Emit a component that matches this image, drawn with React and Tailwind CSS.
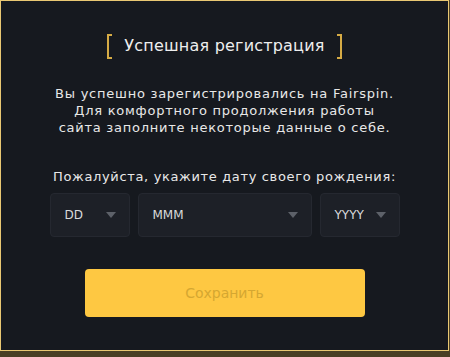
function Caret() {
  return (
    <svg width="10" height="6" viewBox="0 0 10 6" className="shrink-0">
      <path d="M0 0h10L5 6z" fill="#5d6169" />
    </svg>
  );
}

function Select({ label, width }) {
  return (
    <div
      className={`${width} h-[44px] flex items-center justify-between pl-[14px] pr-[13px] rounded-[4px] bg-[#1d2027] border border-[#252830] text-[12px] text-[#d9dadc]`}
    >
      <span>{label}</span>
      <Caret />
    </div>
  );
}

export default function App() {
  return (
    <div
      className="w-[450px] h-[357px] bg-[#4a3f25]"
      style={{ fontFamily: '"DejaVu Sans", "Open Sans", sans-serif' }}
    >
      <div className="w-[449px] h-[351px] bg-[#16191f] border border-[#e9c873] flex flex-col items-center">
        <div className="mt-[32px] h-[26px] flex items-center gap-[8px]">
          <span className="w-[5px] h-[25px] border-l-2 border-y-2 border-[#d6ab45]" />
          <span className="text-[16px] text-[#eeeeee] leading-none px-[4px] tracking-[0.2px]">Успешная регистрация</span>
          <span className="w-[5px] h-[25px] border-r-2 border-y-2 border-[#d6ab45]" />
        </div>

        <p className="mt-[26px] text-center text-[13px] leading-[17px] text-[#e8e8e8] tracking-[0.75px]">
          Вы успешно зарегистрировались на Fairspin.
          <br />
          Для комфортного продолжения работы
          <br />
          сайта заполните некоторые данные о себе.
        </p>

        <p className="mt-[32px] text-[13px] leading-[17px] text-[#e8e8e8] tracking-[0.65px]">
          Пожалуйста, укажите дату своего рождения:
        </p>

        <div className="mt-[8px] flex gap-[8px]">
          <Select label="DD" width="w-[80px]" />
          <Select label="MMM" width="w-[174px]" />
          <Select label="YYYY" width="w-[80px]" />
        </div>

        <button className="mt-[32px] w-[280px] h-[48px] rounded-[4px] bg-[#fec842] text-[14px] text-[#d5a731]">
          Сохранить
        </button>
      </div>
    </div>
  );
}
